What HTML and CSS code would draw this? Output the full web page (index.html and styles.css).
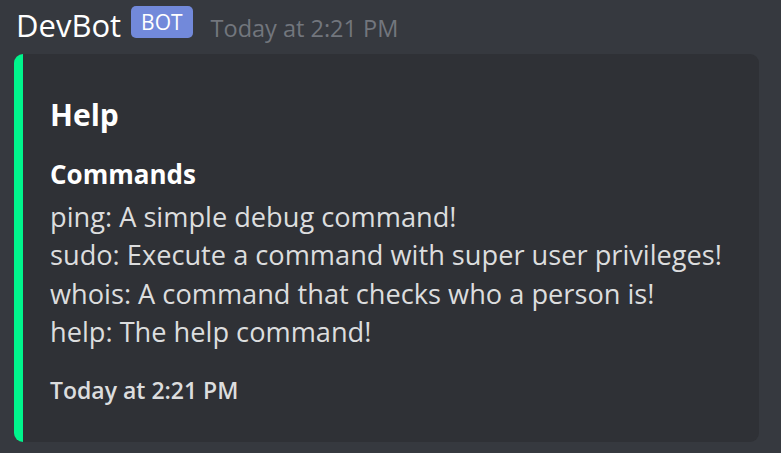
FILE: index.html
```html
<!DOCTYPE html>
<html>
<head>
<meta charset="utf-8">
<link rel="stylesheet" href="styles.css">
</head>
<body>
<div class="message">
  <div class="header">
    <span class="username">DevBot</span>
    <span class="bot-tag">BOT</span>
    <span class="timestamp">Today at 2:21 PM</span>
  </div>
  <div class="embed">
    <div class="embed-title">Help</div>
    <div class="field">
      <div class="field-name">Commands</div>
      <div class="field-value">
        <div>ping: A simple debug command!</div>
        <div>sudo: Execute a command with super user privileges!</div>
        <div>whois: A command that checks who a person is!</div>
        <div>help: The help command!</div>
      </div>
    </div>
    <div class="footer">Today at 2:21 PM</div>
  </div>
</div>
</body>
</html>
```

FILE: styles.css
```css
html, body {
  margin: 0;
  padding: 0;
  background: #36393f;
  height: 100%;
  overflow: hidden;
}
body {
  font-family: "Open Sans", "Noto Sans", sans-serif;
  color: #dcddde;
}
.message {
  padding: 0 22px 0 14px;
}
.header {
  display: flex;
  align-items: flex-start;
  height: 54px;
  padding-left: 2px;
}
.username {
  font-size: 31px;
  color: #ffffff;
  line-height: 36px;
  margin-top: 7px;
}
.bot-tag {
  background: #7289da;
  color: #ffffff;
  font-size: 21px;
  font-weight: 500;
  line-height: 32px;
  height: 32px;
  padding: 0 10px;
  border-radius: 5px;
  margin-left: 10px;
  margin-top: 6px;
}
.timestamp {
  font-size: 23.5px;
  line-height: 30px;
  color: #72767d;
  margin-left: 18px;
  margin-top: 13px;
}
.embed {
  background: #2f3136;
  border-left: 9px solid #00f58c;
  border-radius: 9px;
  height: 388px;
  box-sizing: border-box;
  padding: 41px 20px 0 27px;
}
.embed-title {
  font-size: 30px;
  font-weight: 700;
  color: #ffffff;
  line-height: 40px;
}
.field {
  margin-top: 22px;
}
.field-name {
  font-size: 26px;
  font-weight: 700;
  color: #ffffff;
  line-height: 34px;
}
.field-value {
  margin-top: 7px;
  font-size: 27.2px;
  line-height: 38.3px;
  color: #dcddde;
}
.footer {
  margin-top: 24px;
  font-size: 23px;
  font-weight: 600;
  color: #dcddde;
  line-height: 30px;
}
```
